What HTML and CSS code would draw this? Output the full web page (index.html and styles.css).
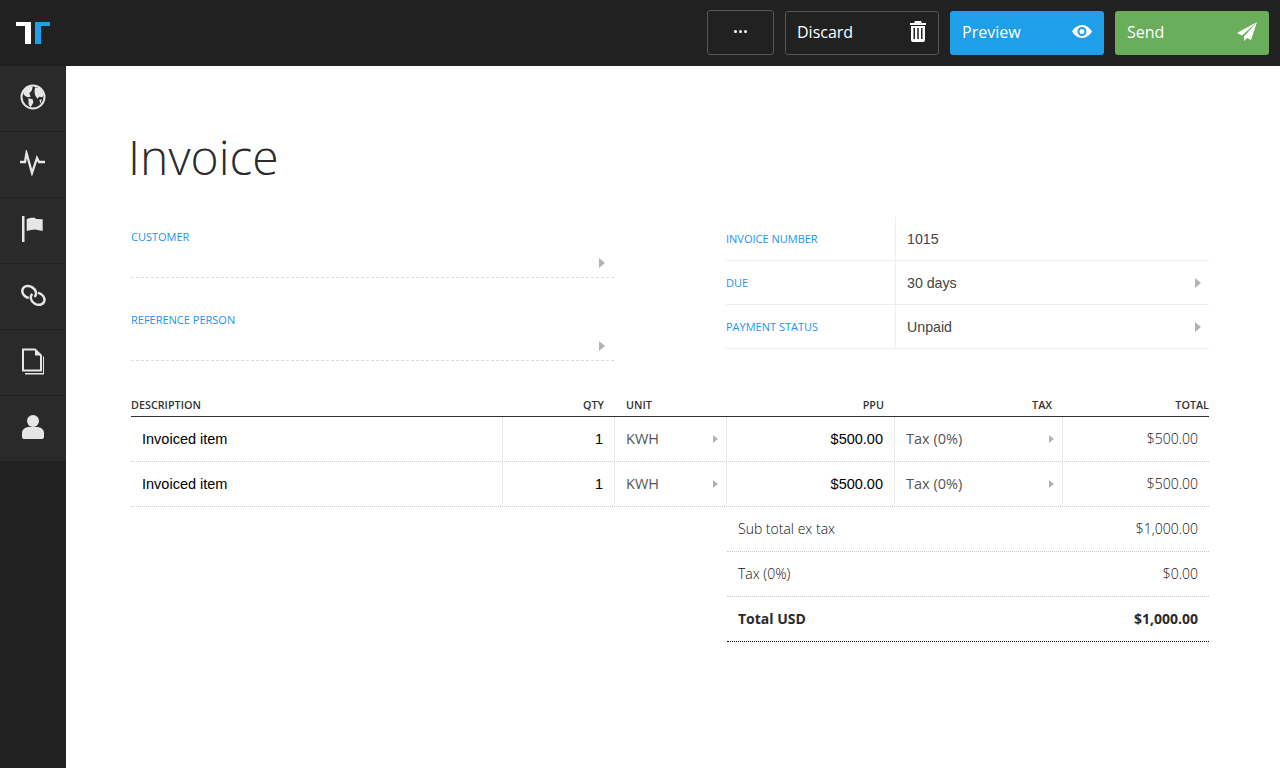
FILE: index.html
```html
<!DOCTYPE html>
<html lang="en">
<head>
    <meta charset="UTF-8">
    <meta name="viewport" content="width=device-width, initial-scale=1.0">
    <title>Invoice</title>
    <link rel="stylesheet" href="styles.css">
</head>
<body>
    <!-- top bar -->
    <header class="topbar">
        <svg class="logo" width="34" height="22" viewBox="0 0 34 22">
            <path fill="#fff" d="M0 0h15v22H9V4H0z"/>
            <path fill="#1f9fe8" d="M19 0h15v4h-9v18h-6z"/>
        </svg>
        <div class="actions">
            <button class="btn btn-more">
                <svg width="13" height="3" viewBox="0 0 13 3"><circle cx="1.500" cy="1.500" r="1.500" fill="#fff"/><circle cx="6.500" cy="1.500" r="1.500" fill="#fff"/><circle cx="11.500" cy="1.500" r="1.500" fill="#fff"/></svg>
            </button>
            <button class="btn btn-outline">Discard
                <svg width="16" height="21" viewBox="0 0 16 21"><path fill="#fff" d="M5 0h6l1 2h4v2H0V2h4zM1 5h14v14a2 2 0 0 1-2 2H3a2 2 0 0 1-2-2zm2.500 2v11H5V7zm3.750 0v11h1.500V7zm3.750 0v11h1.500V7z"/></svg>
            </button>
            <button class="btn btn-blue">Preview
                <svg width="20" height="13" viewBox="0 0 20 13"><path fill="#fff" fill-rule="evenodd" d="M10 0c4.500 0 8 3 10 6.500C18 10 14.500 13 10 13S2 10 0 6.500C2 3 5.500 0 10 0zm0 2a4.500 4.500 0 1 0 0 9 4.500 4.500 0 0 0 0-9zm0 2a2.500 2.500 0 1 1 0 5 2.500 2.500 0 0 1 0-5z"/></svg>
            </button>
            <button class="btn btn-green">Send
                <svg width="20" height="19" viewBox="0 0 20 19"><path fill="#fff" d="M20 0 0 11l5 2.500zM20 0 7 14.500V19l3-3 4 2z"/></svg>
            </button>
        </div>
    </header>

    <div class="layout">
        <!-- side navigation -->
        <nav class="sidebar">
            <a class="nav-item">
                <svg width="26" height="26" viewBox="0 0 26 26"><circle cx="13" cy="13" r="11.500" fill="none" stroke="#e6e6e6" stroke-width="2"/><path fill="#e6e6e6" d="M2.700 7.700 6.700 3.300l6-.6-1 4-2.400 2.600 1.400 3.400-3.400.6L4 11zM8.300 14.300l4.400 1 .6 3.400-2.600 4.600-2-2.300zM15 3.300l5 1 3.300 5-.6 4-3.400-.6-2 2L15 11l-.5-4zM19.300 16l2.400-.7-1 4.700z"/></svg>
            </a>
            <a class="nav-item">
                <svg width="26" height="26" viewBox="0 0 26 26"><path fill="none" stroke="#e6e6e6" stroke-width="2.300" stroke-miterlimit="10" d="M0 12H5L6.500 3 12 23 17 8 19 12H25"/></svg>
            </a>
            <a class="nav-item">
                <svg width="22" height="26" viewBox="0 0 22 26"><path fill="#e6e6e6" d="M0 0h2.500v26H0zM4.700 3 9 1.700h4L14 3l6.700.3V15L13 13.500 9 14l-4.300 1z"/></svg>
            </a>
            <a class="nav-item">
                <svg width="25" height="23" viewBox="-1 0 26 24"><g fill="none" stroke="#e6e6e6" stroke-width="2.600"><path d="M7.030 14.700A7.500 6 30 1 1 12.990 13.460"/><path d="M16.770 9.100A7.500 6 30 1 1 10.810 10.340"/></g></svg>
            </a>
            <a class="nav-item">
                <svg width="22" height="27" viewBox="0 0 22 26"><path fill="none" stroke="#e6e6e6" stroke-width="2" d="M1 1h12l6 6v15H1z"/><path fill="#e6e6e6" d="M13 1l6 6h-6zM21 8h1v18H3v-1.500h18z"/></svg>
            </a>
            <a class="nav-item">
                <svg width="22" height="24" viewBox="0 0 22 24"><circle cx="11" cy="6" r="6" fill="#e6e6e6"/><path fill="#e6e6e6" d="M0 22v-4c0-4 4-6 7-6h8c3 0 7 2 7 6v4a2 2 0 0 1-2 2H2a2 2 0 0 1-2-2z"/></svg>
            </a>
        </nav>

        <main class="content">
            <h1>Invoice</h1>

            <section class="meta">
                <div class="meta-left">
                    <div class="field">
                        <label>CUSTOMER</label>
                        <div class="field-input"><i class="arrow"></i></div>
                    </div>
                    <div class="field">
                        <label>REFERENCE PERSON</label>
                        <div class="field-input"><i class="arrow"></i></div>
                    </div>
                </div>
                <div class="meta-right">
                    <div class="meta-row">
                        <label>INVOICE NUMBER</label>
                        <div class="meta-value">1015</div>
                    </div>
                    <div class="meta-row">
                        <label>DUE</label>
                        <div class="meta-value">30 days<i class="arrow"></i></div>
                    </div>
                    <div class="meta-row">
                        <label>PAYMENT STATUS</label>
                        <div class="meta-value">Unpaid<i class="arrow"></i></div>
                    </div>
                </div>
            </section>

            <!-- invoice lines -->
            <section class="lines">
                <div class="line-head">
                    <div>DESCRIPTION</div>
                    <div class="right">QTY</div>
                    <div>UNIT</div>
                    <div class="right">PPU</div>
                    <div class="right">TAX</div>
                    <div class="right">TOTAL</div>
                </div>
                <div class="line-row">
                    <div class="cell desc">Invoiced item</div>
                    <div class="cell qty">1</div>
                    <div class="cell select">KWH<i class="arrow"></i></div>
                    <div class="cell price">$500.00</div>
                    <div class="cell select">Tax (0%)<i class="arrow"></i></div>
                    <div class="cell sum">$500.00</div>
                </div>
                <div class="line-row">
                    <div class="cell desc">Invoiced item</div>
                    <div class="cell qty">1</div>
                    <div class="cell select">KWH<i class="arrow"></i></div>
                    <div class="cell price">$500.00</div>
                    <div class="cell select">Tax (0%)<i class="arrow"></i></div>
                    <div class="cell sum">$500.00</div>
                </div>
            </section>

            <section class="totals">
                <div class="total-row"><span>Sub total ex tax</span><span>$1,000.00</span></div>
                <div class="total-row"><span>Tax (0%)</span><span>$0.00</span></div>
                <div class="total-row grand"><span>Total USD</span><span>$1,000.00</span></div>
            </section>
        </main>
    </div>
</body>
</html>
```

FILE: styles.css
```css
* {
    box-sizing: border-box;
}
body {
    margin: 0;
    height: 768px;
    overflow: hidden;
    font-family: "Open Sans", Arial, sans-serif;
    background-color: #fff;
    color: #333;
}
.topbar {
    display: flex;
    justify-content: space-between;
    align-items: center;
    height: 66px;
    padding: 0 11px 0 16px;
    background-color: #212121;
}
.logo {
    margin-top: -1px;
}
.actions {
    display: flex;
    gap: 11px;
    align-items: flex-end;
    height: 45px;
    margin-bottom: 2px;
}
.btn {
    display: flex;
    justify-content: space-between;
    align-items: center;
    width: 154px;
    height: 44px;
    padding: 0 12px 2px 12px;
    border: none;
    border-radius: 3px;
    font-family: "Open Sans", Arial, sans-serif;
    font-size: 16px;
    color: #fff;
}
.btn-more {
    justify-content: center;
    width: 67px;
    height: 45px;
    padding: 0 0 1px;
    border: 1px solid #555;
    background-color: #212121;
}
.btn-outline {
    padding-left: 11px;
    padding-right: 12px;
    border: 1px solid #555;
    background-color: #212121;
}
.btn-blue {
    background-color: #1f9fe8;
}
.btn-green {
    background-color: #6aae5c;
}
.layout {
    display: flex;
    height: 702px;
}
.sidebar {
    flex: 0 0 66px;
    background-color: #212121;
}
.nav-item {
    display: flex;
    justify-content: center;
    align-items: center;
    height: 66px;
    padding-bottom: 3px;
    border-bottom: 1px solid #212121;
    background-color: #2a2a2a;
}
.nav-item:last-child {
    height: 65px;
    border-bottom: none;
}
.content {
    flex: 1;
    padding: 0 71px 0 65px;
}
h1 {
    margin: 57px 0 0 -3px;
    font-size: 48px;
    font-weight: 300;
    line-height: 68px;
    color: #2b2b2b;
}
label {
    font-size: 11px;
    color: #1c94ee;
}
.meta {
    display: flex;
    justify-content: space-between;
    margin-top: 26px;
}
.meta-left {
    width: 483px;
}
.field {
    height: 83px;
    padding-top: 12px;
}
.field label {
    display: block;
    line-height: 16px;
}
.field-input {
    position: relative;
    height: 33px;
    border-bottom: 1px dashed #ddd;
}
.field-input .arrow {
    position: absolute;
    right: 9px;
    top: 13px;
}
.meta-right {
    width: 483px;
}
.meta-row {
    display: flex;
    align-items: stretch;
    height: 44px;
    border-bottom: 1px solid #eee;
}
.meta-row label {
    display: flex;
    align-items: center;
    width: 170px;
    border-right: 1px solid #eee;
}
.meta-value {
    display: flex;
    flex: 1;
    justify-content: space-between;
    align-items: center;
    padding: 0 8px 0 11px;
    font-family: "Liberation Sans", Arial, sans-serif;
    font-size: 14.200px;
    color: #444;
}
.arrow {
    display: block;
    width: 0;
    height: 0;
    border-left: 6px solid #b3b3b3;
    border-top: 5px solid transparent;
    border-bottom: 5px solid transparent;
}
.lines {
    margin-top: 14px;
}
.line-head,
.line-row {
    display: grid;
    grid-template-columns: 372px 112px 112px 168px 168px 146px;
}
.line-head {
    height: 20px;
    border-bottom: 1px solid #333;
    font-size: 10.800px;
    font-weight: 600;
    line-height: 16px;
    color: #333;
}
.line-head div:nth-child(2),
.line-head div:nth-child(4),
.line-head div:nth-child(5) {
    padding-right: 11px;
}
.line-head div:nth-child(3) {
    padding-left: 11px;
}
.right {
    text-align: right;
}
.line-row {
    height: 45px;
    border-bottom: 1px dotted #ccc;
}
.cell {
    display: flex;
    align-items: center;
    padding: 0 11px;
    border-right: 1px dotted #ddd;
    font-family: "Liberation Sans", Arial, sans-serif;
    font-size: 14.500px;
    color: #000;
}
.cell:last-child {
    border-right: none;
}
.qty,
.price {
    justify-content: flex-end;
}
.select {
    justify-content: space-between;
    padding: 0 8px 2px 11px;
    font-family: "Open Sans", Arial, sans-serif;
    color: #555;
}
.sum {
    justify-content: flex-end;
    padding-bottom: 2px;
    font-family: "Open Sans", Arial, sans-serif;
    font-size: 14px;
    font-weight: 300;
    color: #111;
}
.select .arrow {
    margin-top: 1px;
    border-left-width: 5px;
    border-top-width: 4px;
    border-bottom-width: 4px;
}
.totals {
    margin-left: 596px;
}
.total-row {
    display: flex;
    justify-content: space-between;
    align-items: center;
    height: 45px;
    padding: 0 11px 2px;
    border-bottom: 1px dotted #ccc;
    font-size: 14px;
    font-weight: 300;
    color: #111;
}
.grand {
    border-bottom: 1px dotted #000;
    font-weight: 700;
    color: #2a2a2a;
}
```
